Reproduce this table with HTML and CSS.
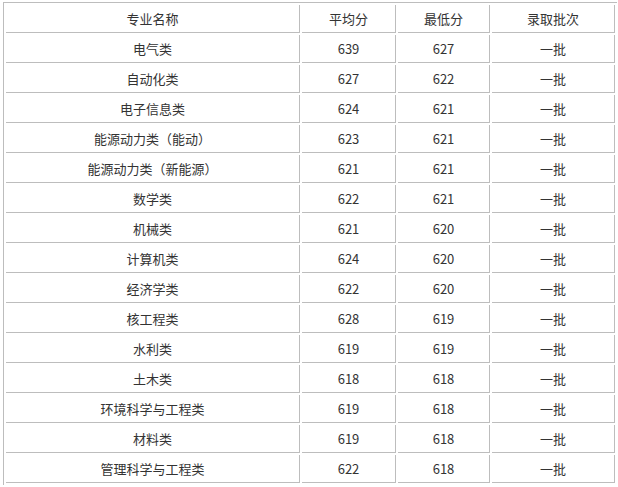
FILE: index.html
```html
<!DOCTYPE html>
<html lang="zh">
<head>
<meta charset="utf-8">
<link rel="stylesheet" href="styles.css">
</head>
<body>
<table class="score-table">
  <tbody>
    <tr class="head"><td class="c1">专业名称</td><td class="c2">平均分</td><td class="c3">最低分</td><td class="c4">录取批次</td></tr>
    <tr><td class="c1">电气类</td><td class="c2">639</td><td class="c3">627</td><td class="c4">一批</td></tr>
    <tr><td class="c1">自动化类</td><td class="c2">627</td><td class="c3">622</td><td class="c4">一批</td></tr>
    <tr><td class="c1">电子信息类</td><td class="c2">624</td><td class="c3">621</td><td class="c4">一批</td></tr>
    <tr><td class="c1">能源动力类（能动）</td><td class="c2">623</td><td class="c3">621</td><td class="c4">一批</td></tr>
    <tr><td class="c1">能源动力类（新能源）</td><td class="c2">621</td><td class="c3">621</td><td class="c4">一批</td></tr>
    <tr><td class="c1">数学类</td><td class="c2">622</td><td class="c3">621</td><td class="c4">一批</td></tr>
    <tr><td class="c1">机械类</td><td class="c2">621</td><td class="c3">620</td><td class="c4">一批</td></tr>
    <tr><td class="c1">计算机类</td><td class="c2">624</td><td class="c3">620</td><td class="c4">一批</td></tr>
    <tr><td class="c1">经济学类</td><td class="c2">622</td><td class="c3">620</td><td class="c4">一批</td></tr>
    <tr><td class="c1">核工程类</td><td class="c2">628</td><td class="c3">619</td><td class="c4">一批</td></tr>
    <tr><td class="c1">水利类</td><td class="c2">619</td><td class="c3">619</td><td class="c4">一批</td></tr>
    <tr><td class="c1">土木类</td><td class="c2">618</td><td class="c3">618</td><td class="c4">一批</td></tr>
    <tr><td class="c1">环境科学与工程类</td><td class="c2">619</td><td class="c3">618</td><td class="c4">一批</td></tr>
    <tr><td class="c1">材料类</td><td class="c2">619</td><td class="c3">618</td><td class="c4">一批</td></tr>
    <tr><td class="c1">管理科学与工程类</td><td class="c2">622</td><td class="c3">618</td><td class="c4">一批</td></tr>
  </tbody>
</table>
</body>
</html>
```
FILE: styles.css
```css
html, body {
  margin: 0;
  padding: 0;
  background: #ffffff;
}
body {
  padding: 2px 0 0 3px;
  font-family: "Noto Sans CJK SC", "Noto Sans", sans-serif;
  font-size: 13px;
  color: #333333;
}
.score-table {
  border-collapse: separate;
  border-spacing: 2px;
  border-top: 1px solid #bdbdbd;
  border-left: 1px solid #bdbdbd;
  table-layout: fixed;
}
.score-table td {
  padding: 0;
  line-height: 27px;
  text-align: center;
  white-space: nowrap;
  border-right: 1px solid #bdbdbd;
  border-bottom: 1px solid #bdbdbd;
  overflow: hidden;
}
.c1 { width: 293px; }
.c2 { width: 93px; }
.c3 { width: 91px; }
.c4 { width: 122px; }
```
